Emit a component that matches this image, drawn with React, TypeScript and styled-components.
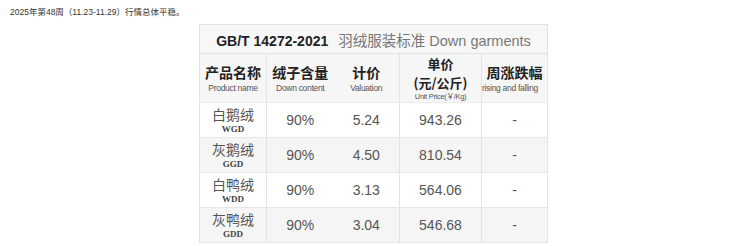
import styled, { createGlobalStyle } from "styled-components";

type Row = {
  name: string;
  code: string;
  content: string;
  valuation: string;
  price: string;
  change: string;
};

const rows: Row[] = [
  { name: "白鹅绒", code: "WGD", content: "90%", valuation: "5.24", price: "943.26", change: "-" },
  { name: "灰鹅绒", code: "GGD", content: "90%", valuation: "4.50", price: "810.54", change: "-" },
  { name: "白鸭绒", code: "WDD", content: "90%", valuation: "3.13", price: "564.06", change: "-" },
  { name: "灰鸭绒", code: "GDD", content: "90%", valuation: "3.04", price: "546.68", change: "-" },
];

const GlobalStyle = createGlobalStyle`
  html, body {
    margin: 0;
    padding: 0;
    background: #fff;
  }
  body {
    font-family: "Liberation Sans", "Noto Sans CJK SC", sans-serif;
  }
`;

const App = () => {
  return (
    <>
      <GlobalStyle />
      <Page>
        <Intro>2025年第48周（11.23-11.29）行情总体平稳。</Intro>
        <Table>
          <colgroup>
            <col style={{ width: 67 }} />
            <col style={{ width: 67 }} />
            <col style={{ width: 66 }} />
            <col style={{ width: 82 }} />
            <col style={{ width: 66 }} />
          </colgroup>
          <tbody>
            <TitleRow>
              <td colSpan={5}>
                <b>GB/T 14272-2021</b>
                <span>羽绒服装标准 Down garments</span>
              </td>
            </TitleRow>
            <HeadRow>
              <HeadCell $line>
                <strong>产品名称</strong>
                <small>Product name</small>
              </HeadCell>
              <HeadCell>
                <strong>绒子含量</strong>
                <small>Down content</small>
              </HeadCell>
              <HeadCell $line>
                <strong>计价</strong>
                <small>Valuation</small>
              </HeadCell>
              <HeadCell $line $tight>
                <strong>单价</strong>
                <strong>(元/公斤)</strong>
                <small>Unit Price(￥/Kg)</small>
              </HeadCell>
              <HeadCell>
                <strong>周涨跌幅</strong>
                <Clip>rising and falling</Clip>
              </HeadCell>
            </HeadRow>
            {rows.map((r, i) => (
              <DataRow key={r.code} $shade={i % 2 === 1}>
                <NameCell>
                  <span>{r.name}</span>
                  <em>{r.code}</em>
                </NameCell>
                <NumCell>{r.content}</NumCell>
                <NumCell $line>{r.valuation}</NumCell>
                <NumCell $line>{r.price}</NumCell>
                <NumCell>{r.change}</NumCell>
              </DataRow>
            ))}
          </tbody>
        </Table>
      </Page>
    </>
  );
};

const Page = styled.div`
  padding: 6px 0 0 10px;
`;

const Intro = styled.div`
  font-family: "Liberation Sans", "Noto Sans CJK SC", sans-serif;
  font-size: 8.5px;
  line-height: 12px;
  color: #333;
  height: 18px;
`;

const Table = styled.table`
  margin-left: 189px;
  width: 349px;
  table-layout: fixed;
  border-collapse: collapse;
  border: 1px solid #e3e3e3;
  td {
    padding: 0;
    text-align: center;
  }
`;

const TitleRow = styled.tr`
  background: #f7f7f7;
  td {
    height: 28px;
    font-size: 14px;
    border-bottom: 1px solid #e3e3e3;
    white-space: nowrap;
  }
  b {
    color: #222;
    font-weight: bold;
    margin-right: 10px;
  }
  span {
    color: #777;
    font-size: 14.5px;
  }
`;

const HeadRow = styled.tr`
  background: #f6f6f6;
  td {
    height: 48px;
  }
`;

const HeadCell = styled.td<{ $line?: boolean; $tight?: boolean }>`
  border-right: ${(p) => (p.$line ? "1px solid #e3e3e3" : "none")};
  border-bottom: 1px solid #ececec;
  overflow: hidden;
  strong {
    display: block;
    font-family: "Noto Sans CJK SC", serif;
    font-size: ${(p) => (p.$tight ? "13px" : "14px")};
    line-height: ${(p) => (p.$tight ? "19px" : "20px")};
    font-weight: 600;
    color: #222;
  }
  small {
    display: block;
    font-size: ${(p) => (p.$tight ? "7.5px" : "8.5px")};
    line-height: ${(p) => (p.$tight ? "10px" : "12px")};
    color: #555;
    letter-spacing: -0.3px;
    white-space: nowrap;
  }
`;

const Clip = styled.small`
  direction: rtl;
  overflow: hidden;
  text-align: left;
`;

const DataRow = styled.tr<{ $shade: boolean }>`
  background: ${(p) => (p.$shade ? "#f5f5f5" : "#fff")};
  td {
    height: 34px;
    border-bottom: 1px solid #e6e6e6;
  }
`;

const NameCell = styled.td`
  border-right: 1px solid #e3e3e3;
  span {
    display: block;
    font-family: "Noto Sans CJK SC", serif;
    font-size: 14px;
    line-height: 17px;
    color: #555;
  }
  em {
    display: block;
    font-style: normal;
    font-family: "Liberation Serif", serif;
    font-weight: bold;
    font-size: 9px;
    line-height: 12px;
    color: #444;
  }
`;

const NumCell = styled.td<{ $line?: boolean }>`
  border-right: ${(p) => (p.$line ? "1px solid #e3e3e3" : "none")};
  font-size: 14px;
  color: #555;
`;

export default App;
